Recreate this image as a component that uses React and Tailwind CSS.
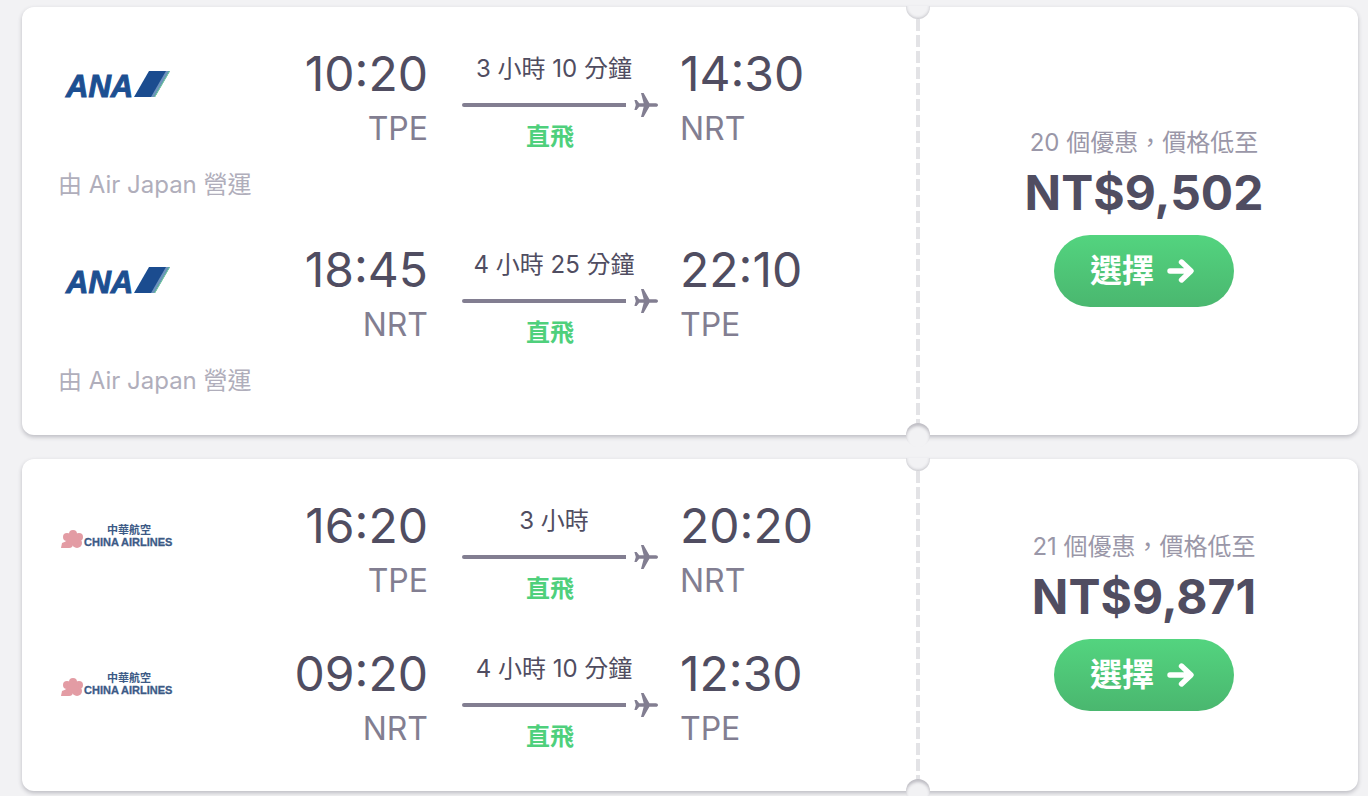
import React from 'react';

const flights = [
  {
    id: 'ana',
    deals: 20,
    price: 'NT$9,502',
    legs: [
      { airline: 'ana', depart: '10:20', from: 'TPE', arrive: '14:30', to: 'NRT', duration: '3 小時 10 分鐘', operator: '由 Air Japan 營運' },
      { airline: 'ana', depart: '18:45', from: 'NRT', arrive: '22:10', to: 'TPE', duration: '4 小時 25 分鐘', operator: '由 Air Japan 營運' },
    ],
  },
  {
    id: 'china-airlines',
    deals: 21,
    price: 'NT$9,871',
    legs: [
      { airline: 'china', depart: '16:20', from: 'TPE', arrive: '20:20', to: 'NRT', duration: '3 小時' },
      { airline: 'china', depart: '09:20', from: 'NRT', arrive: '12:30', to: 'TPE', duration: '4 小時 10 分鐘' },
    ],
  },
];

const AnaLogo = () => (
  <svg width="120" height="40" viewBox="0 0 120 40" role="img" aria-label="ANA">
    <text x="8" y="32" fontSize="31" fontWeight="700" fontStyle="italic" fill="#1d4f91" stroke="#1d4f91" strokeWidth="1" className="font-['Liberation_Sans',sans-serif]">
      ANA
    </text>
    <path d="M91 6h21L97 32H76z" fill="#1b4c8f" />
    <path d="M108 6h3L96 32h-3z" fill="#6d93bd" />
    <path d="M111 6h1L97 32h-1z" fill="#7fe0a0" />
  </svg>
);

const ChinaAirlinesLogo = () => (
  <svg width="120" height="40" viewBox="0 0 120 40" role="img" aria-label="China Airlines">
    <g fill="#e39ca4">
      <circle cx="15" cy="17" r="4" />
      <circle cx="21" cy="20" r="4" />
      <circle cx="19" cy="26" r="5" />
      <circle cx="11" cy="27" r="4" />
      <circle cx="9" cy="20" r="4" />
      <circle cx="15" cy="22" r="6" />
      <path d="M9 24l-5 2-1 5 8 0z" />
    </g>
    <text x="49" y="17" fontSize="11" fontWeight="700" fill="#3c5a86" className="font-['Noto_Sans_CJK_TC',sans-serif]">
      中華航空
    </text>
    <text x="26" y="29" fontSize="11" fontWeight="700" fill="#3c5a86" stroke="#3c5a86" strokeWidth="0.3" className="font-['Liberation_Sans',sans-serif]">
      CHINA AIRLINES
    </text>
  </svg>
);

const PlaneIcon = () => (
  <svg width="24" height="24" viewBox="0 0 24 24" fill="#827e91" aria-hidden="true">
    <path d="M7 0H9.6L15.4 10.2H21.8C23.2 10.2 24 11.1 24 12s-.8 1.8-2.2 1.8H15.4L9.6 24H7L9.7 13.8H5.2L2.6 17H.4L1.8 12 .4 7H2.6L5.2 10.200H9.7z" />
  </svg>
);

const ArrowIcon = () => (
  <svg width="32" height="32" viewBox="0 0 32 32" fill="none" stroke="#fff" strokeWidth="5.4" strokeLinecap="round" strokeLinejoin="round" aria-hidden="true">
    <path d="M4 16h20M15.5 7l9.5 9-9.5 9" />
  </svg>
);

const Leg = ({ leg }) => (
  <div>
    <div className="grid grid-cols-[168px_1fr_auto_1fr]">
      <div className="flex h-21 items-center">
        {leg.airline === 'ana' ? <AnaLogo /> : <ChinaAirlinesLogo />}
      </div>
      <div className="text-right">
        <p className="text-5xl leading-[62px] text-[#504d61]">{leg.depart}</p>
        <p className="text-[32px] leading-12 text-[#827e91]">{leg.from}</p>
      </div>
      <div className="mr-[22px] ml-[34px] w-49 pt-2 text-center text-2xl">
        <p className="pr-3 leading-9 text-[#504d61]">{leg.duration}</p>
        <div className="flex h-9 items-center gap-2">
          <div className="h-1 flex-1 rounded-l-full bg-[#827e91]" />
          <PlaneIcon />
        </div>
        <p className="pr-5 leading-7 font-semibold text-[#4fd07c]">直飛</p>
      </div>
      <div>
        <p className="text-5xl leading-[62px] text-[#504d61]">{leg.arrive}</p>
        <p className="text-[32px] leading-12 text-[#827e91]">{leg.to}</p>
      </div>
    </div>
    {leg.operator && <p className="mt-4 text-2xl leading-8 text-[#b0aebb]">{leg.operator}</p>}
  </div>
);

const TicketCard = ({ flight }) => (
  <article className="flex rounded-xl bg-white shadow-[0_2px_4px_rgba(60,58,75,0.3)]">
    <div className="flex flex-1 flex-col gap-[38px] px-9 pt-9 pb-[38px]">
      {flight.legs.map((leg) => (
        <Leg key={leg.depart} leg={leg} />
      ))}
    </div>

    {/* perforation between the itinerary and the price stub */}
    <div className="relative w-0">
      <div className="absolute inset-y-0 -left-0.5 w-1 bg-[repeating-linear-gradient(to_bottom,#e3e3e6_0_8px,transparent_8px_12px,#e3e3e6_12px_16px)]" />
      <div className="absolute -top-3 -left-3 size-6 rounded-full bg-[#f2f2f4] shadow-[inset_0_-1px_3px_rgba(60,58,75,0.25)] [clip-path:inset(11px_0_0_0)]" />
      <div className="absolute -bottom-3 -left-3 size-6 rounded-full bg-[#f2f2f4] shadow-[inset_0_3px_3px_rgba(60,58,75,0.28)]" />
    </div>

    <div className="flex w-110 flex-col items-center justify-center pb-3 pl-3">
      <p className="text-2xl leading-10 text-[#9a97a8]">{flight.deals} 個優惠，價格低至</p>
      <p className="text-5xl leading-[60px] font-bold text-[#504d61]">{flight.price}</p>
      <button
        type="button"
        className="mt-3 flex h-18 items-center gap-3 rounded-full bg-linear-to-b from-[#53d47f] to-[#4ab76f] px-9 text-[32px] font-bold text-white"
      >
        選擇
        <ArrowIcon />
      </button>
    </div>
  </article>
);

const App = () => {
  return (
    <main
      lang="zh-Hant"
      className="flex min-h-screen flex-col gap-6 bg-[#f2f2f4] pt-[7px] pr-2.5 pb-1 pl-[22px] font-['Inter','Noto_Sans_CJK_TC',sans-serif]"
    >
      {flights.map((flight) => (
        <TicketCard key={flight.id} flight={flight} />
      ))}
    </main>
  );
};

export default App;
